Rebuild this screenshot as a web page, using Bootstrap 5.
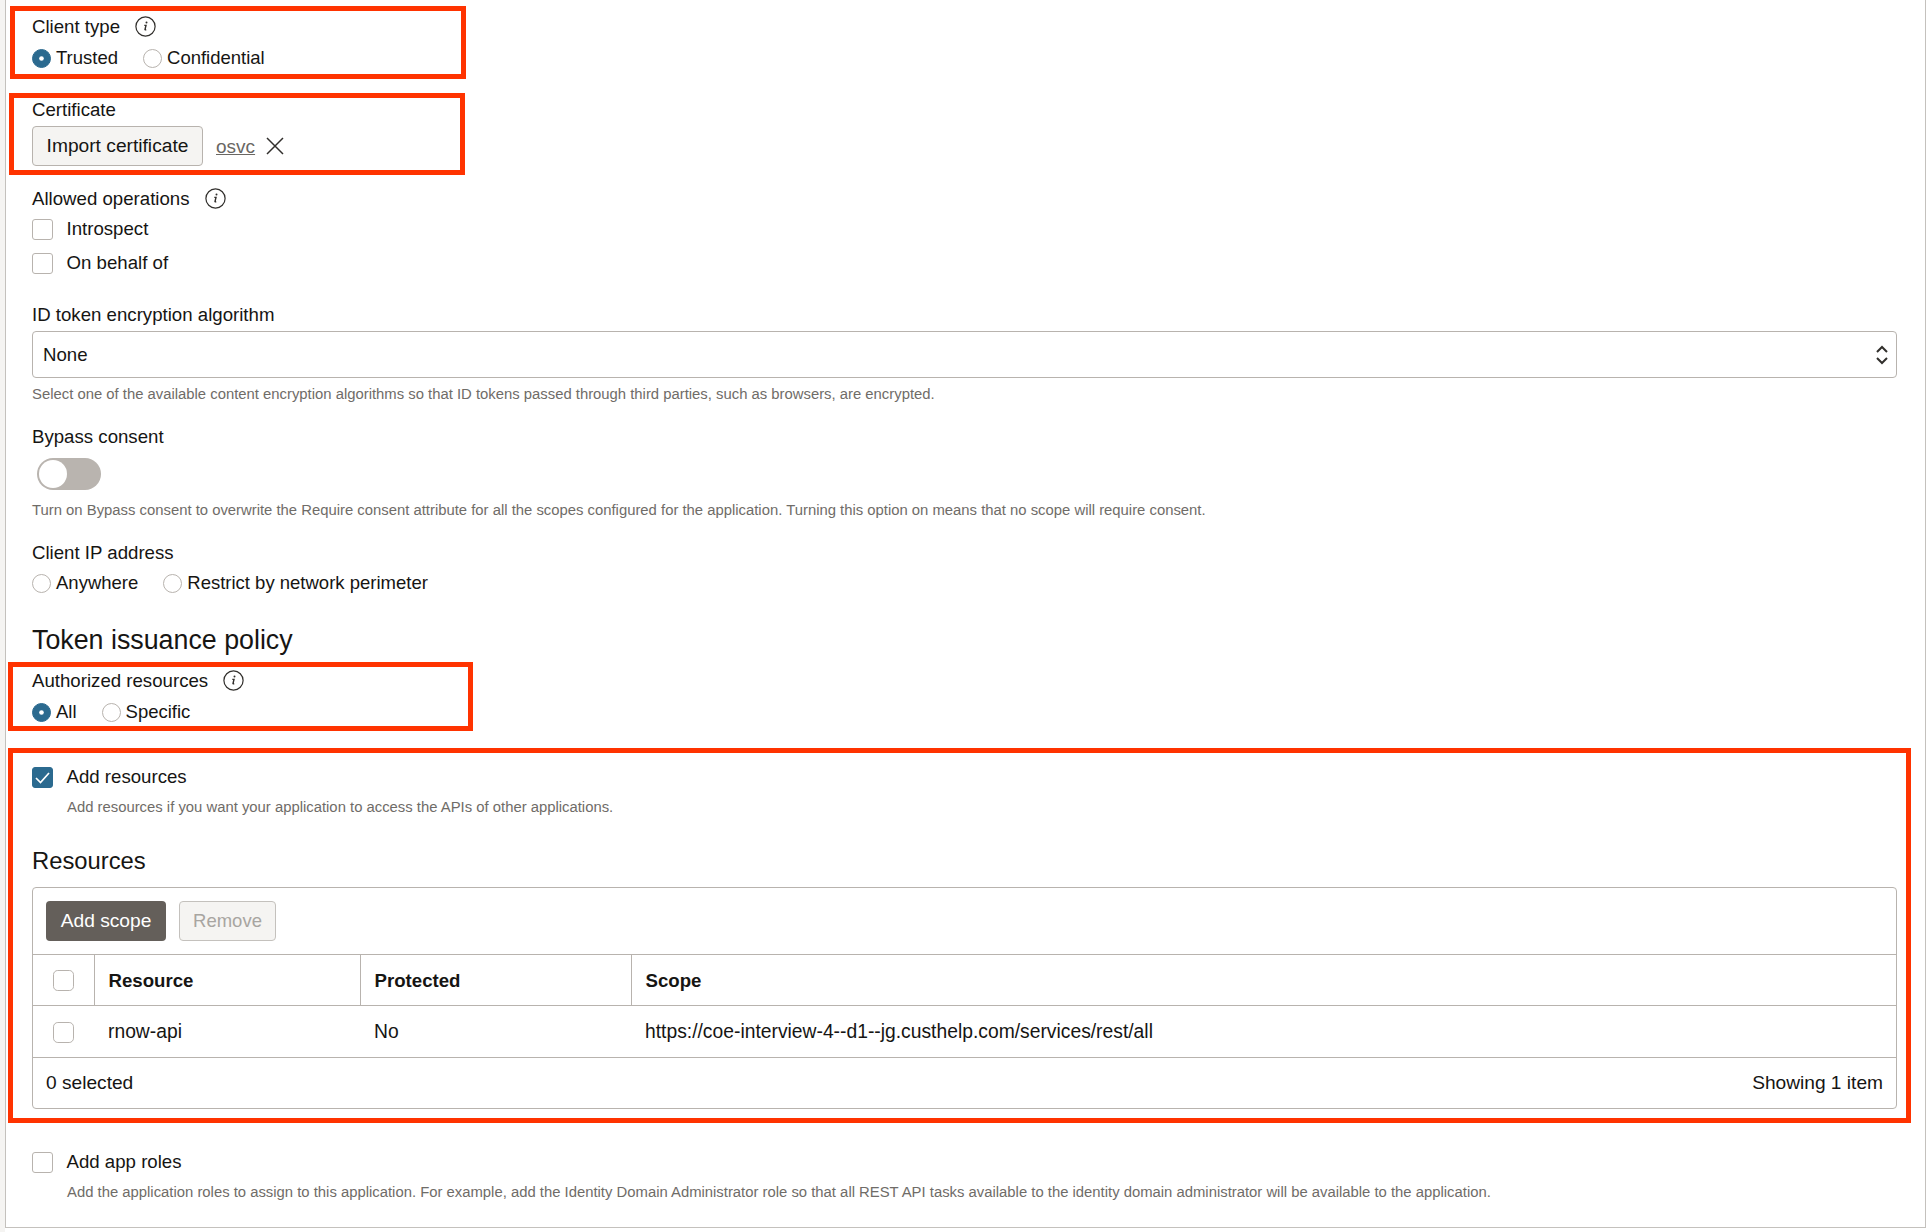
<!DOCTYPE html>
<html lang="en">
<head>
<meta charset="utf-8">
<title>Client configuration</title>
<link href="https://cdn.jsdelivr.net/npm/bootstrap@5.3.0/dist/css/bootstrap.min.css" rel="stylesheet">
<style>
html,body{background:#fff;margin:0}
body{font-family:"Liberation Sans",Arial,sans-serif;font-size:18.65px;line-height:24px;color:#161513}
.stage{position:relative;width:1928px;height:1232px;overflow:hidden;background:#fff}
.strip{width:5px;height:1232px;background:#f5f4f2}
.panel{position:absolute;left:5px;top:0;width:1921px;height:1228px;background:#fff;border-left:1px solid #c4c1bd;border-right:1px solid #c4c1bd;border-bottom:1px solid #c4c1bd;padding:14px 28px 0 26px}
.lbl{height:24px;line-height:24px;display:flex;align-items:center}
.lbl-i{padding-top:1px}
.info{width:21px;height:21px;margin-left:15px;flex:none}
.hint{font-size:14.85px;line-height:20px;color:#6f6c68}
.opts{display:flex;height:24px;align-items:center;font-size:18.5px}
.opts .form-check{margin:0;padding:0;min-height:0;display:flex;align-items:center}
.opts .form-check-input{float:none;margin:0;width:19px;height:19px;border:1px solid #b8b3ae;background-color:#fff}
.opts .form-check-input:checked{background-color:#2b6a8f;border-color:#2b6a8f;background-image:url("data:image/svg+xml,%3csvg xmlns='http://www.w3.org/2000/svg' viewBox='-9.5 -9.5 19 19'%3e%3ccircle r='2.6' fill='%23fff'/%3e%3c/svg%3e")}
.opts .form-check-label{margin-left:5px}
.opts .form-check+.form-check{margin-left:25px}
.chk{display:flex;align-items:center;height:24px}
.chk .form-check-input,.tick{float:none;margin:0;width:21px;height:21px;border:1px solid #b8b3ae;border-radius:3px;background-color:#fff;flex:none}
.chk .form-check-input:checked{background-color:#2b6a8f;border-color:#2b6a8f;background-size:21px;background-image:url("data:image/svg+xml,%3csvg xmlns='http://www.w3.org/2000/svg' viewBox='0 0 21 21'%3e%3cpath fill='none' stroke='%23fff' stroke-width='1.7' d='M4 11l4.5 4.5L17 6'/%3e%3c/svg%3e")}
.chk label{margin-left:13.5px}
.indent{padding-left:35px}
.btn.plain{height:40px;width:171px;padding:0;font-size:19.2px;line-height:38px;color:#161513;background:#f5f4f2;border:1px solid #b8b3ae;border-radius:4px}
.btn.dark{height:40px;width:120px;padding:0;font-size:19.2px;line-height:40px;color:#fff;background:#645f5a;border:0;border-radius:4px}
.btn.off{height:40px;width:97px;padding:0;font-size:18.5px;line-height:38px;color:#a8a5a1;background:#f5f4f2;border:1px solid #c4c1bd;border-radius:4px;opacity:1}
.filelink{font-size:19px;color:#6a6763;text-decoration:underline;margin-left:13px;margin-top:1px}
.xicon{width:18px;height:18px;margin-left:11px}
.form-select.pick{height:47px;padding:1px 40px 0 10px;font-size:18.65px;color:#161513;border:1px solid #b8b3ae;border-radius:4px;background-position:right 4px center;background-size:20px 26px;background-image:url("data:image/svg+xml,%3csvg xmlns='http://www.w3.org/2000/svg' viewBox='0 0 20 26'%3e%3cpath fill='none' stroke='%23312f2c' stroke-width='2' d='M5 10l5-5 5 5M5 16l5 5 5-5'/%3e%3c/svg%3e")}
.sw{width:64px;height:32px;border-radius:16px;background:#b9b4af;position:relative;margin-left:5px}
.sw::after{content:"";position:absolute;left:2px;top:2px;width:28px;height:28px;border-radius:50%;background:#fff}
.sect{line-height:30px;font-weight:400;margin:0}
.sect-a{font-size:26.8px}
.sect-b{font-size:23.8px}
.m4{margin-top:4px}.m6{margin-top:6px}.m7{margin-top:7px}.m8{margin-top:8px}.m9{margin-top:9px}.m10{margin-top:10px}.m11{margin-top:11px}.m13{margin-top:13px}.m20{margin-top:20px}.m21{margin-top:21px}.m28{margin-top:28px}.m29{margin-top:29px}.m30{margin-top:30px}.m41{margin-top:41px}
.grid-card{height:222px;border:1px solid #b8b3ae;border-radius:4px;overflow:hidden;background:#fff}
.tools{height:67px;padding:13px 0 0 13px;display:flex;gap:13px;border-bottom:1px solid #b8b3ae}
.rtable{margin:0;font-size:18.65px;table-layout:fixed;width:100%;--bs-table-border-color:#b8b3ae;color:#161513}
.rtable th,.rtable td{padding:2px 13px 0 14px;vertical-align:middle;border-bottom:1px solid #b8b3ae;color:#161513;line-height:24px}
.rtable th:first-child,.rtable td:first-child{padding-left:0;padding-right:0}
.rtable thead th{height:50px;border-left:1px solid #b8b3ae;font-weight:700}
.rtable thead th:first-child{border-left:0}
.rtable tbody td{height:52px;font-size:19.3px}
.rtable .tick{display:block;margin:0 auto;appearance:none}
.foot{height:51px;padding:0 13px;display:flex;align-items:center;justify-content:space-between;font-size:19.15px}
.mark-box{position:absolute;border:5px solid #ff3300;pointer-events:none}
</style>
</head>
<body>
<div class="stage">
<div class="strip"></div>
<div class="panel">
  <div class="lbl lbl-i">Client type
    <svg class="info" viewBox="0 0 21 21"><circle cx="10.5" cy="10.5" r="9.6" fill="none" stroke="#312f2c" stroke-width="1.2"/><path d="M9.3 9.4h1.7l-1 4q-.2.8 1.2.1" fill="none" stroke="#312f2c" stroke-width="1.4"/><circle cx="11.5" cy="6.6" r="1" fill="#312f2c"/></svg>
  </div>
  <div class="opts m8">
    <div class="form-check"><input class="form-check-input" type="radio" name="a" id="a1" checked><label class="form-check-label" for="a1">Trusted</label></div>
    <div class="form-check"><input class="form-check-input" type="radio" name="a" id="a2"><label class="form-check-label" for="a2">Confidential</label></div>
  </div>
  <div class="lbl m28">Certificate</div>
  <div class="d-flex align-items-center m4">
    <button class="btn plain" type="button">Import certificate</button>
    <a class="filelink" href="#">osvc</a>
    <svg class="xicon" viewBox="0 0 18 18"><path d="M1 1l16 16M17 1L1 17" stroke="#312f2c" stroke-width="1.5" fill="none"/></svg>
  </div>
  <div class="lbl lbl-i m20">Allowed operations
    <svg class="info" viewBox="0 0 21 21"><circle cx="10.5" cy="10.5" r="9.6" fill="none" stroke="#312f2c" stroke-width="1.2"/><path d="M9.3 9.4h1.7l-1 4q-.2.8 1.2.1" fill="none" stroke="#312f2c" stroke-width="1.4"/><circle cx="11.5" cy="6.6" r="1" fill="#312f2c"/></svg>
  </div>
  <div class="chk m7"><input class="form-check-input" type="checkbox" id="c1"><label for="c1">Introspect</label></div>
  <div class="chk m10"><input class="form-check-input" type="checkbox" id="c2"><label for="c2">On behalf of</label></div>
  <div class="lbl m28">ID token encryption algorithm</div>
  <select class="form-select pick m4" aria-label="ID token encryption algorithm"><option>None</option></select>
  <div class="hint m6">Select one of the available content encryption algorithms so that ID tokens passed through third parties, such as browsers, are encrypted.</div>
  <div class="lbl m21">Bypass consent</div>
  <div class="sw m9"></div>
  <div class="hint m10">Turn on Bypass consent to overwrite the Require consent attribute for all the scopes configured for the application. Turning this option on means that no scope will require consent.</div>
  <div class="lbl m21">Client IP address</div>
  <div class="opts m6">
    <div class="form-check"><input class="form-check-input" type="radio" name="b" id="b1"><label class="form-check-label" for="b1">Anywhere</label></div>
    <div class="form-check"><input class="form-check-input" type="radio" name="b" id="b2"><label class="form-check-label" for="b2">Restrict by network perimeter</label></div>
  </div>
  <h2 class="sect sect-a m30">Token issuance policy</h2>
  <div class="lbl lbl-i m13">Authorized resources
    <svg class="info" viewBox="0 0 21 21"><circle cx="10.5" cy="10.5" r="9.6" fill="none" stroke="#312f2c" stroke-width="1.2"/><path d="M9.3 9.4h1.7l-1 4q-.2.8 1.2.1" fill="none" stroke="#312f2c" stroke-width="1.4"/><circle cx="11.5" cy="6.6" r="1" fill="#312f2c"/></svg>
  </div>
  <div class="opts m8">
    <div class="form-check"><input class="form-check-input" type="radio" name="d" id="d1" checked><label class="form-check-label" for="d1">All</label></div>
    <div class="form-check"><input class="form-check-input" type="radio" name="d" id="d2"><label class="form-check-label" for="d2">Specific</label></div>
  </div>
  <div class="chk m41"><input class="form-check-input" type="checkbox" id="e1" checked><label for="e1">Add resources</label></div>
  <div class="hint indent m8">Add resources if you want your application to access the APIs of other applications.</div>
  <h2 class="sect sect-b m29">Resources</h2>
  <div class="grid-card m11">
    <div class="tools">
      <button class="btn dark" type="button">Add scope</button>
      <button class="btn off" type="button" disabled>Remove</button>
    </div>
    <table class="table rtable">
      <colgroup><col style="width:61px"><col style="width:266px"><col style="width:271px"><col></colgroup>
      <thead><tr><th><input class="tick form-check-input" type="checkbox" aria-label="Select all"></th><th>Resource</th><th>Protected</th><th>Scope</th></tr></thead>
      <tbody><tr><td><input class="tick form-check-input" type="checkbox" aria-label="Select row"></td><td>rnow-api</td><td>No</td><td>https://coe-interview-4--d1--jg.custhelp.com/services/rest/all</td></tr></tbody>
    </table>
    <div class="foot"><span>0 selected</span><span>Showing 1 item</span></div>
  </div>
  <div class="chk m41"><input class="form-check-input" type="checkbox" id="f1"><label for="f1">Add app roles</label></div>
  <div class="hint indent m8">Add the application roles to assign to this application. For example, add the Identity Domain Administrator role so that all REST API tasks available to the identity domain administrator will be available to the application.</div>
</div>
<div class="mark-box" style="left:10px;top:6px;width:456px;height:73px"></div>
<div class="mark-box" style="left:9px;top:93px;width:456px;height:82px"></div>
<div class="mark-box" style="left:8px;top:662px;width:465px;height:69px"></div>
<div class="mark-box" style="left:8px;top:748px;width:1903px;height:375px"></div>
</div>
<script src="https://cdn.jsdelivr.net/npm/bootstrap@5.3.0/dist/js/bootstrap.bundle.min.js"></script>
</body>
</html>
